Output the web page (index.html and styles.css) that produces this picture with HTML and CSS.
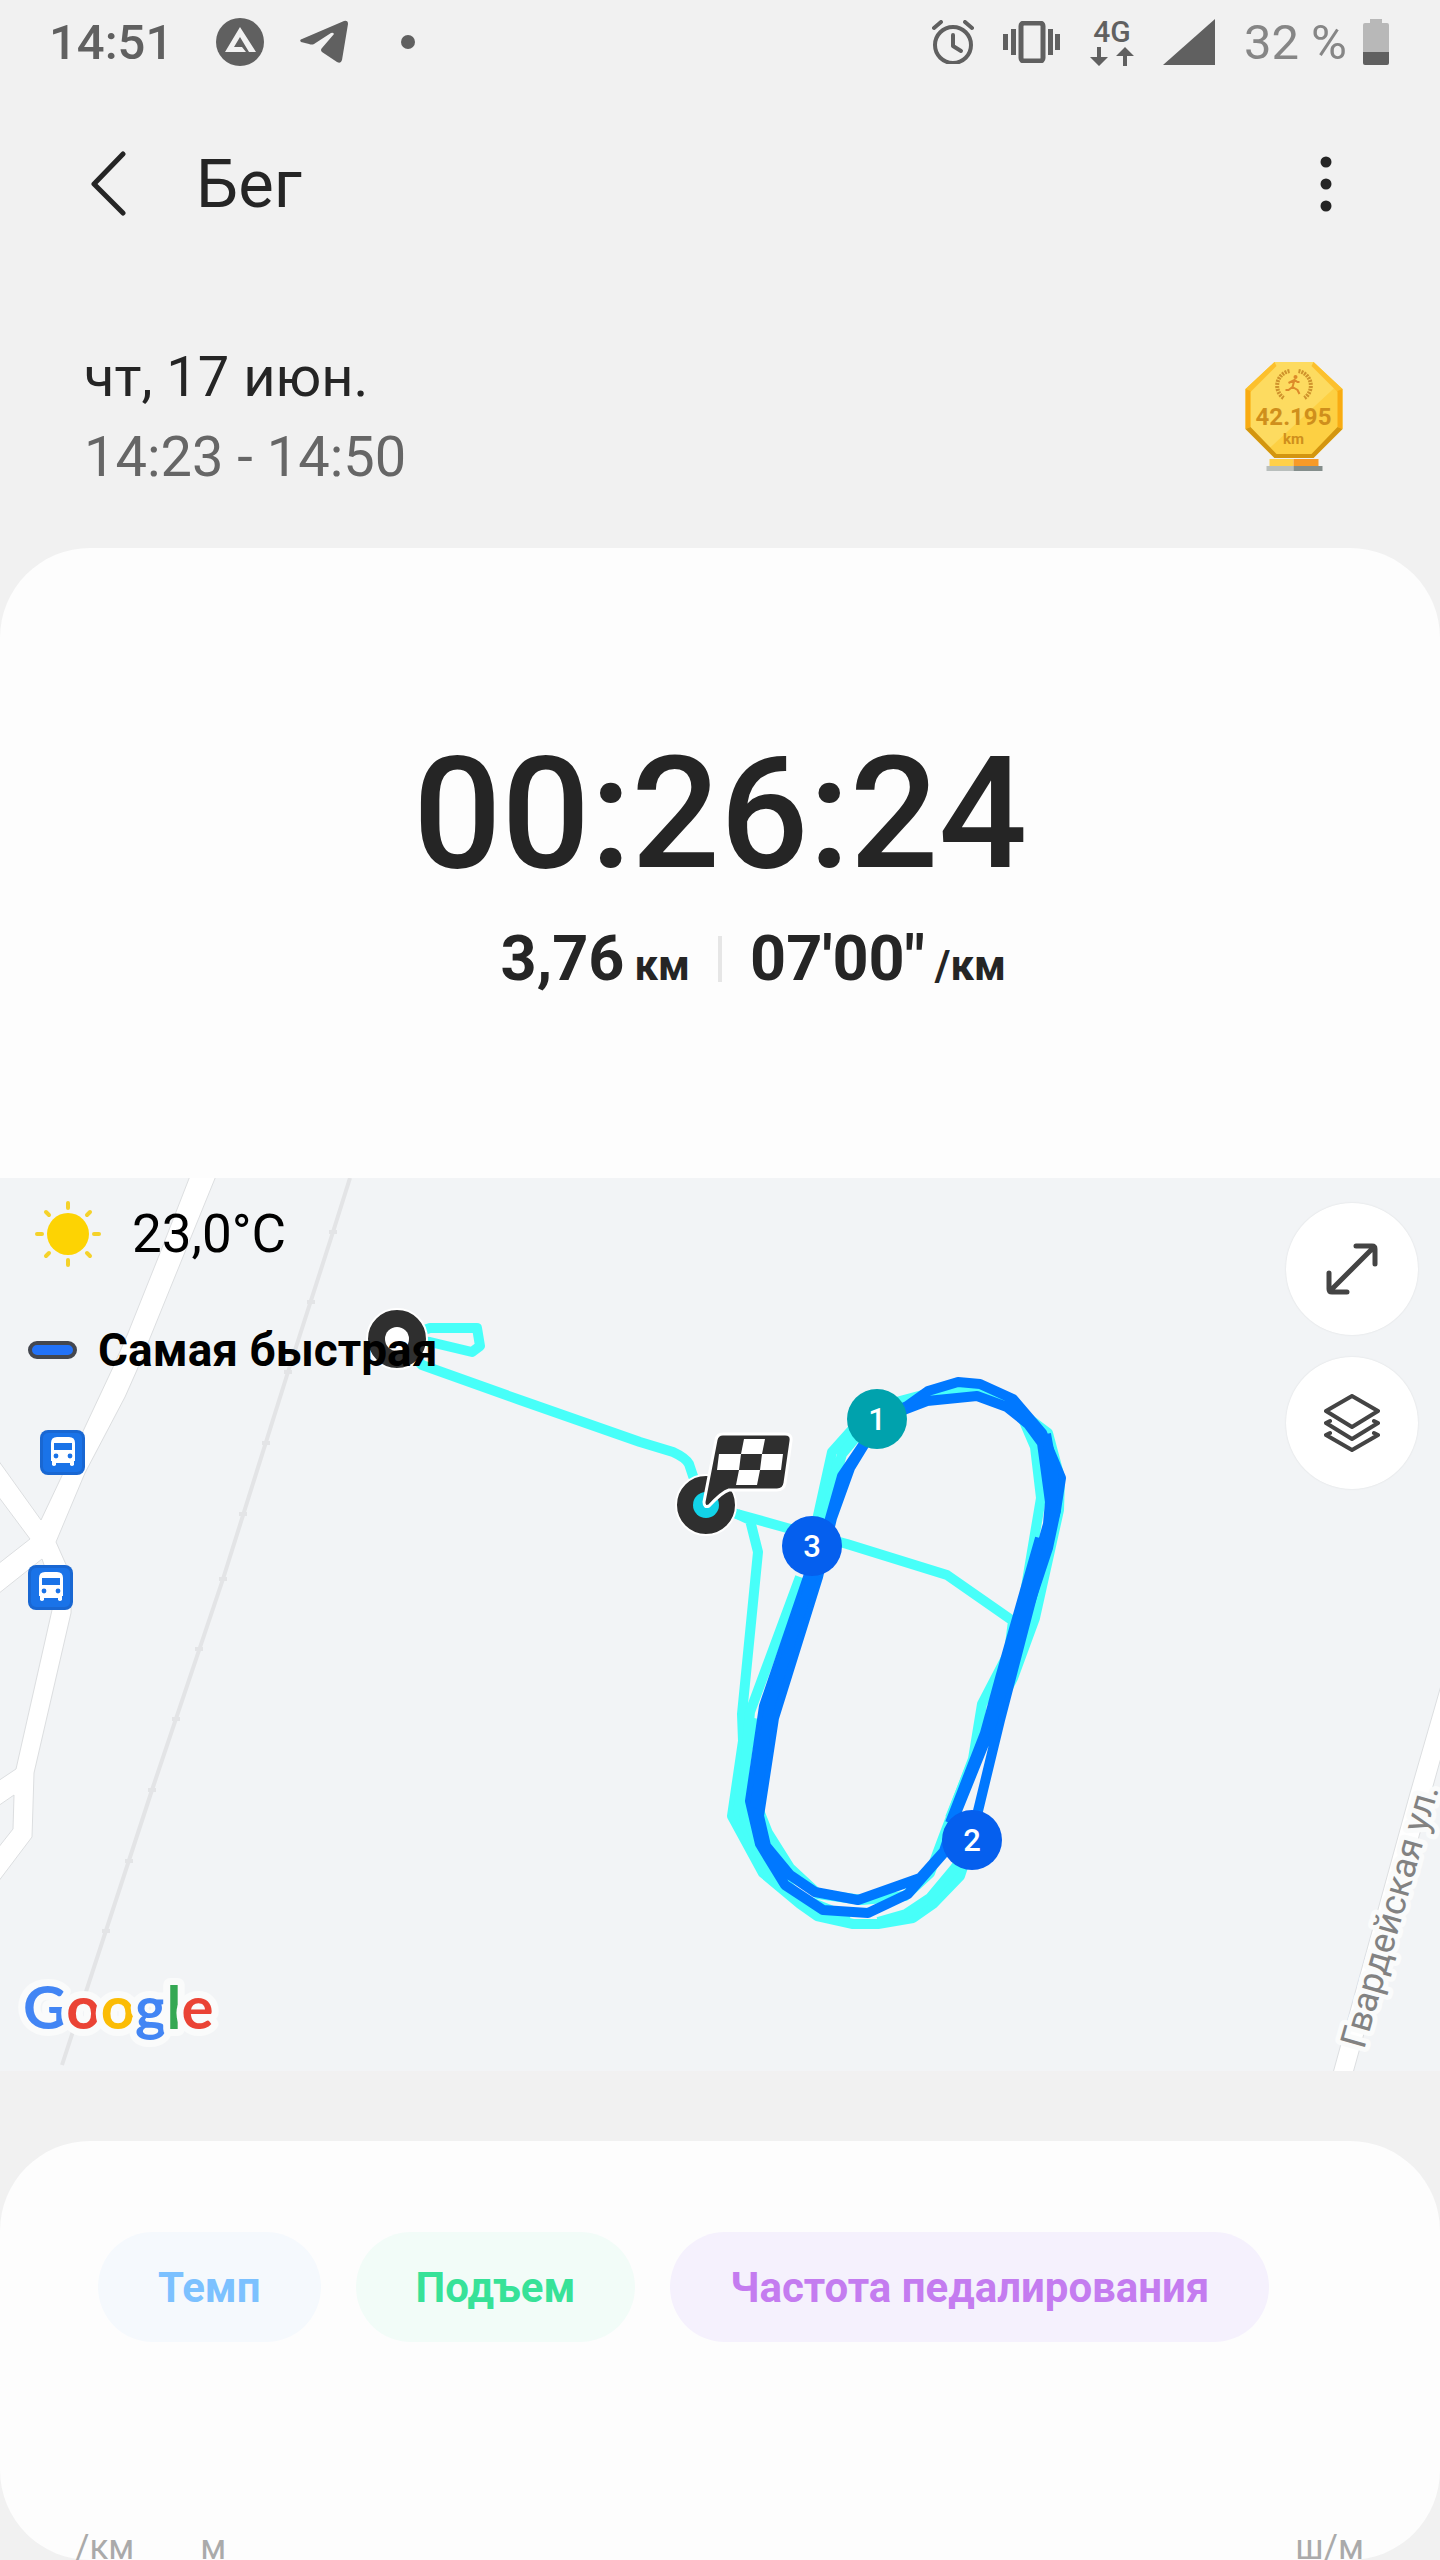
FILE: index.html
```html
<!doctype html>
<html lang="ru">
  <head>
    <meta charset="UTF-8" />
    <meta name="viewport" content="width=device-width, initial-scale=1.0" />
    <title>Бег</title>
    <link rel="stylesheet" href="styles.css">
  </head>
  <body>
    <div class="status-bar">
      <div class="status-left">
        <span class="clock">14:51</span>
        <svg width="48" height="48" viewBox="0 0 48 48">
          <circle cx="24" cy="24" r="24" fill="#606060" />
          <path d="M24 9 L40 34 H33 L24 19 L18 29 H26 L30 34 H9 Z" fill="#f1f1f1" />
        </svg>
        <svg width="50" height="44" viewBox="0 0 50 44">
          <path d="M3 19 L45 1 Q49 0 49 4 L43 40 Q42 44 38 42 L23 32 Q21 30 23 28 L35 14 Q34 12 32 13 L15 24 Q13 25 10 24 L2 22 Q0 20 3 19 Z" fill="#606060" />
        </svg>
        <svg width="50" height="14" viewBox="0 0 50 14">
          <circle cx="24" cy="7" r="7" fill="#606060" />
        </svg>
      </div>
      <div class="status-right">
        <svg width="42" height="44" viewBox="0 0 42 44">
          <g fill="none" stroke="#606060" stroke-width="4" stroke-linecap="round" stroke-linejoin="round">
            <circle cx="21" cy="25" r="18" />
            <path d="M21 15 V26 L29 31" />
            <path d="M2 8 L9 2 M40 8 L33 2" />
          </g>
        </svg>
        <svg width="58" height="42" viewBox="0 0 58 42">
          <rect x="18" y="2" width="22" height="38" rx="3" fill="none" stroke="#606060" stroke-width="5" />
          <path d="M0 13 h5 v16 h-5z M8 8 h5 v26 h-5z M45 8 h5 v26 h-5z M52 13 h5 v16 h-5z" fill="#606060" />
        </svg>
        <div class="network">
          <span>4G</span>
          <svg width="44" height="19" viewBox="0 0 44 19">
            <path d="M7 0 h4 v10 h7 L9 19 L0 10 h7z M33 19 h4 v-10 h7 L35 0 L26 9 h7z" fill="#606060" />
          </svg>
        </div>
        <svg width="52" height="46" viewBox="0 0 52 46">
          <path d="M52 0 V46 H0 Z" fill="#606060" />
        </svg>
        <div class="battery">
          <span>32 %</span>
          <svg width="26" height="46" viewBox="0 0 26 46">
            <path d="M7 0 H19 V4 H24 Q26 4 26 6 V33 H0 V6 Q0 4 2 4 H7 Z" fill="#b8b8b8" />
            <path d="M0 33 H26 V44 Q26 46 24 46 H2 Q0 46 0 44 Z" fill="#606060" />
          </svg>
        </div>
      </div>
    </div>

    <header class="header">
      <button class="icon-button" aria-label="Назад">
        <svg width="36" height="66" viewBox="0 0 36 66">
          <path d="M33 3 L4 33 L33 62" fill="none" stroke="#252525" stroke-width="5" stroke-linecap="round" stroke-linejoin="round" />
        </svg>
      </button>
      <h1>Бег</h1>
      <button class="icon-button" aria-label="Меню">
        <svg width="12" height="56" viewBox="0 0 12 56">
          <g fill="#252525">
            <circle cx="6" cy="6" r="5.5" />
            <circle cx="6" cy="28" r="5.5" />
            <circle cx="6" cy="50" r="5.5" />
          </g>
        </svg>
      </button>
    </header>

    <section class="summary">
      <div>
        <div class="date">чт, 17 июн.</div>
        <div class="period">14:23 - 14:50</div>
      </div>
      <svg class="medal" width="98" height="110" viewBox="0 0 97 110">
        <path d="M29 0 H68 L97 27 V67 L68 96 H29 L0 67 V27 Z" fill="#fdd043" />
        <path d="M29 0 H68 L92 23 L22 88 L5 67 V27 Z" fill="#fddb60" />
        <path d="M29 0 L0 27 L5 30 L31 4 Z M68 0 L97 27 L92 30 L66 4 Z" fill="#fcc02d" />
        <path d="M0 27 L5 29 V65 L0 67 Z M97 27 L92 29 V65 L97 67 Z" fill="#f9ab12" />
        <path d="M0 67 L5 65 L31 92 H66 L92 65 L97 67 L68 96 H29 Z" fill="#d3950f" />
        <path d="M24 97 H48 V104 H24 Z" fill="#ffd04a" />
        <path d="M48 97 H73 V104 H48 Z" fill="#f79a28" />
        <path d="M21 104 H48 V109 H21 Z" fill="#b9bfbd" />
        <path d="M48 104 H77 V109 H48 Z" fill="#848e8c" />
        <path d="M44 9 A15 15 0 0 0 38 36 M53 9 A15 15 0 0 1 59 36" fill="none" stroke="#cf932c" stroke-width="4" stroke-dasharray="2 1" />
        <circle cx="50" cy="15" r="2" fill="#dd8a2a" />
        <path d="M49 18 L47 25 L43 28 H40 M47 25 L52 28 L54 32 M43 21 L49 18 L52 20 H54" fill="none" stroke="#dd8a2a" stroke-width="2" />
        <text x="48" y="63" class="medal-value">42.195</text>
        <text x="48" y="82" class="medal-unit">km</text>
      </svg>
    </section>

    <section class="card result">
      <div class="timer">00:26:24</div>
      <div class="stats">
        <div class="stat distance"><span>3,76</span><small>км</small></div>
        <div class="divider"></div>
        <div class="stat pace"><span>07'00"</span><small>/км</small></div>
      </div>
    </section>

    <section class="map">
      <svg class="map-canvas" viewBox="0 0 1440 893">
        <!-- roads -->
        <g class="road">
          <path d="M190 -2 L160 75 L128 155 L115 185 L85 249 L41 342 L-2 282 V318 L30 361 L-2 386 V416 L42 381 L52 410 L52 432 L16 591 L-2 603 V628 L14 617 L13 651 L-2 670 V704 L32 659 L34 595 L71 435 L72 400 L56 364 L85 295 L125 219 L137 192 L185 74 L216 -2 Z" />
          <path d="M1442 504 L1410 615 L1333 895 H1353 L1442 576 Z" />
        </g>
        <!-- railway -->
        <path class="rail" d="M350 0 L333 54 L288 194 L223 401 L152 612 L62 887" />
        <path class="rail-ties" d="M329 54 h8 M307 124 h8 M284 194 h8 M262 265 h8 M239 336 h8 M219 401 h8 M195 471 h8 M172 541 h8 M148 612 h8 M125 683 h8 M102 753 h8" />
        <text class="street" transform="translate(1364 872) rotate(-74)">Гвардейская ул.</text>

        <!-- bus stops -->
        <g id="bus-a" transform="translate(40 252)">
          <rect width="45" height="45" rx="8" fill="#1967d2" />
          <rect x="3" y="3" width="39" height="39" rx="5" fill="#1a73e8" />
          <path d="M11 13 Q11 7 17 7 H29 Q35 7 35 13 V31 H34 V35 Q32 37 30 35 V33 H16 V35 Q14 37 12 35 V31 H11 Z" fill="#fff" />
          <path d="M14 13 H32 V20 H14 Z" fill="#1a73e8" />
          <circle cx="16" cy="26" r="2.4" fill="#1a73e8" />
          <circle cx="30" cy="26" r="2.4" fill="#1a73e8" />
        </g>
        <use href="#bus-a" x="-12" y="135" />

        <!-- whole track -->
        <g class="track">
          <path d="M397 161 L430 150 H477 L480 168 L472 174 L430 164 L397 161 L422 187 L520 222 L640 264 L673 274 Q686 280 689 286 L693 298 L706 327 L737 336 L787 350 L847 366 L947 397 L1013 443 L1009 474 L982 526 L973 581 L943 660 L930 695 L905 718 L862 722 L818 716 L790 690 L768 655 L754 620" />
          <path d="M737 336 L750 342 L758 374 L742 536 L743 563 L732 638 L763 695 L800 726 L817 738 L853 746 L878 746 L913 740 L933 726 L960 698 L972 662" />
          <path d="M878 744 L906 736 L930 720 L955 690 L972 662 M754 540 L748 570 L738 634 L768 693 L805 727 L840 740" />
          <path d="M800 399 L750 534 L744 600 L744 636 L770 688 L800 720 L850 740" />
          <path d="M817 342 L832 274 L857 246 L900 223 L930 215 L965 212 L1000 219 L1023 241 L1035 269 L1041 320 L1025 415 L1008 480" />
          <path d="M824 342 L842 276 L862 252 M830 330 L838 280 M1000 219 L1048 255 L1060 300 L1059 332 L1035 440 L1013 500 L982 560 L950 640" />
          <path d="M758 630 L770 668 L795 700" />
        </g>
        <!-- fastest kilometres -->
        <g class="track fast">
          <path d="M972 662 L978 633 L1000 542 L1033 415 L1056 332 L1061 300 L1042 255 L1013 221 L980 206 L958 204 L928 213 L907 228 L877 241 L863 267 L842 298 L829 344 L808 399 L764 528 L750 623 L760 666 L785 707 L823 732 L868 735 L908 716 L943 676 L957 633 L990 551 L1024 431 L1048 346 L1050 324 L1042 265 L1028 246 L1007 229 L977 218 L927 223 L880 241 L850 290 L832 340 L818 399 L774 540 L759 638 L766 668 L790 697 L815 714 L858 722 L920 700 L945 672" />
          <path d="M1056 332 L1048 370 L1015 470 L990 551 M1046 256 L1054 300 L1052 332 M812 399 L769 530 L755 630 M1040 360 L1000 500 L985 555 L950 645" />
        </g>

        <!-- start point -->
        <circle cx="397" cy="161" r="30" fill="#2f2f2f" stroke="#fff" stroke-width="2" />
        <circle cx="397" cy="161" r="12" fill="#fff" />

        <!-- finish point -->
        <circle cx="706" cy="327" r="30" fill="#2f2f2f" stroke="#fff" stroke-width="2" />
        <circle cx="706" cy="327" r="13" fill="#12d3e8" />
        <path d="M723 256 H785 Q792 256 791 263 L785 305 Q784 312 777 312 H729 Q722 314 709 328 Q704 330 704 324 L716 262 Q717 256 723 256 Z" fill="#2f2f2f" stroke="#fff" stroke-width="3" />
        <path d="M744 261 H765 L762 276 H741 Z M719 276 H741 L739 292 H717 Z M762 276 H783 L781 292 H760 Z M739 292 H760 L757 307 H736 Z" fill="#fff" />

        <!-- kilometre marks -->
        <g class="mark">
          <circle cx="877" cy="241" r="30" fill="#00a2ad" />
          <text x="877" y="252">1</text>
          <circle cx="972" cy="662" r="30" fill="#055fee" />
          <text x="972" y="673">2</text>
          <circle cx="812" cy="368" r="30" fill="#055fee" />
          <text x="812" y="379">3</text>
        </g>

        <text class="google" x="23" y="851"><tspan fill="#4285f4">G</tspan><tspan fill="#ea4335">o</tspan><tspan fill="#fbbc05">o</tspan><tspan fill="#4285f4">g</tspan><tspan fill="#34a853">l</tspan><tspan fill="#ea4335">e</tspan></text>
      </svg>

      <div class="map-info">
        <div class="weather">
          <svg width="66" height="66" viewBox="0 0 66 66">
            <circle cx="33" cy="33" r="21" fill="#fdd303" />
            <path d="M33 2 V7 M33 59 V64 M2 33 H7 M59 33 H64 M11 11 L14 14 M52 52 L55 55 M11 55 L14 52 M52 14 L55 11" stroke="#f5d22a" stroke-width="4" stroke-linecap="round" />
          </svg>
          <span>23,0°C</span>
        </div>
        <div class="legend">
          <i class="legend-line"></i>
          <span>Самая быстрая</span>
        </div>
      </div>

      <div class="map-buttons">
        <button class="round-button" aria-label="Развернуть">
          <svg width="52" height="52" viewBox="0 0 52 52">
            <path d="M4 48 L48 4 M30 3 H46 Q49 3 49 6 V21 M3 30 V46 Q3 49 6 49 H21" fill="none" stroke="#444" stroke-width="5" stroke-linecap="round" />
          </svg>
        </button>
        <button class="round-button" aria-label="Слои">
          <svg width="56" height="58" viewBox="0 0 56 58">
            <path d="M28 2 L54 17 L28 33 L2 17 Z M6 27 L2 29 L28 45 L54 29 L50 27 M6 39 L2 41 L28 56 L54 41 L50 39" fill="none" stroke="#444" stroke-width="4" stroke-linecap="round" stroke-linejoin="round" />
          </svg>
        </button>
      </div>
    </section>

    <section class="card charts">
      <div class="chips">
        <button class="chip chip-pace">Темп</button>
        <button class="chip chip-climb">Подъем</button>
        <button class="chip chip-cadence">Частота педалирования</button>
      </div>
      <div class="axis">
        <span>/км</span>
        <span>м</span>
        <span class="axis-right">ш/м</span>
      </div>
    </section>
  </body>
</html>
```

FILE: styles.css
```css
* {
  box-sizing: border-box;
}

body {
  margin: 0;
  background-color: #f1f1f1;
  color: #252525;
  font-family: Roboto, "Noto Sans", sans-serif;
}

svg {
  display: block;
  flex: none;
}

button {
  border: none;
  padding: 0;
  font-family: inherit;
  cursor: pointer;
}

/* status bar */
.status-bar {
  display: flex;
  justify-content: space-between;
  height: 84px;
  padding: 0 51px 0 49px;
  color: #606060;
  font-size: 49px;
  font-weight: 500;
}

.status-left,
.status-right {
  display: flex;
  align-items: center;
}

.status-left {
  gap: 35px;
}

.clock {
  margin-right: 8px;
}

.status-right {
  gap: 29px;
}

.network {
  display: flex;
  flex-direction: column;
  align-items: center;
  gap: 2px;
  font-size: 30px;
  line-height: 26px;
}

.battery {
  display: flex;
  align-items: center;
  gap: 16px;
  color: #868686;
  font-weight: 400;
}

/* header */
.header {
  display: flex;
  align-items: center;
  padding: 60px 108px 0 90px;
}

.header h1 {
  flex: 1;
  margin: 0 0 0 70px;
  font-size: 67px;
  font-weight: 400;
  line-height: 80px;
}

.icon-button {
  background: none;
}

.summary {
  display: flex;
  justify-content: space-between;
  align-items: center;
  padding: 113px 97px 51px 84px;
  font-size: 56px;
  line-height: 80px;
}

.period {
  color: #666;
}

.medal-value,
.medal-unit {
  fill: #cf8f1c;
  font-size: 24px;
  font-weight: 700;
  text-anchor: middle;
}

.medal-unit {
  font-size: 15px;
}

.card {
  background-color: #fdfdfd;
  border-radius: 90px;
}

/* result */
.result {
  padding: 186px 0 179px;
  border-radius: 90px 90px 0 0;
}

.timer {
  font-size: 156px;
  font-weight: 500;
  line-height: 160px;
  text-align: center;
}

.stats {
  display: grid;
  grid-template-columns: 1fr 4px 1fr;
  align-items: center;
  gap: 28px;
  margin-top: 25px;
}

.stat {
  display: flex;
  align-items: baseline;
  gap: 10px;
  height: 80px;
  font-size: 63px;
  font-weight: 700;
  line-height: 80px;
}

.stat small {
  font-size: 42px;
  line-height: 50px;
}

.distance {
  justify-content: flex-end;
}

.divider {
  height: 46px;
  background-color: #e6e6e6;
}

/* map */
.map {
  position: relative;
  background-color: #f2f4f6;
}

.map-canvas {
  width: 100%;
  height: auto;
}

.road {
  fill: #fff;
  stroke: #dcdee0;
  stroke-width: 1;
}

.rail,
.rail-ties {
  fill: none;
  stroke: #e3e4e6;
  stroke-width: 4;
}

.street {
  fill: #828282;
  stroke: #fafbfb;
  stroke-width: 10;
  stroke-linejoin: round;
  paint-order: stroke;
  font-size: 36px;
}

.track {
  fill: none;
  stroke: #47fff9;
  stroke-width: 10;
  stroke-linejoin: round;
}

.fast {
  stroke: #0078ff;
}

.mark text {
  fill: #fff;
  font-size: 31px;
  font-weight: 500;
  text-anchor: middle;
}

.google {
  stroke: #fafbfb;
  stroke-width: 14;
  stroke-linejoin: round;
  paint-order: stroke;
  font-family: Lato, sans-serif;
  font-size: 60px;
  font-weight: 700;
}

.map-info {
  position: absolute;
  top: 18px;
  left: 28px;
  color: #000;
}

.weather,
.legend {
  display: flex;
  align-items: center;
}

.weather {
  gap: 31px;
  padding-left: 7px;
  font-size: 53px;
  line-height: 76px;
}

.legend {
  gap: 21px;
  margin-top: 48px;
  font-size: 46px;
  font-weight: 700;
  line-height: 60px;
}

.legend-line {
  width: 49px;
  height: 18px;
  border: 4px solid #44474f;
  border-radius: 9px;
  background-color: #2272f8;
}

.map-buttons {
  position: absolute;
  top: 25px;
  right: 22px;
  display: flex;
  flex-direction: column;
  gap: 22px;
}

.round-button {
  display: flex;
  justify-content: center;
  align-items: center;
  width: 132px;
  height: 132px;
  border-radius: 50%;
  background-color: #fff;
  box-shadow: 0 0 2px rgba(0, 0, 0, 0.1);
}

/* charts */
.charts {
  margin-top: 70px;
  padding: 91px 76px 0 75px;
}

.chips {
  display: flex;
  gap: 35px;
  padding-left: 23px;
}

.chip {
  height: 110px;
  padding: 0 60px;
  border-radius: 55px;
  font-size: 42px;
  font-weight: 700;
}

.chip-pace {
  background-color: #f5f9fd;
  color: #7cc1ff;
}

.chip-climb {
  background-color: #f2fcf8;
  color: #37e298;
}

.chip-cadence {
  background-color: #f5f1fd;
  color: #c47cf0;
}

.axis {
  display: flex;
  gap: 66px;
  height: 24px;
  margin-top: 194px;
  color: #aaa;
  font-size: 35px;
  line-height: 24px;
}

.axis-right {
  margin-left: auto;
}
```
